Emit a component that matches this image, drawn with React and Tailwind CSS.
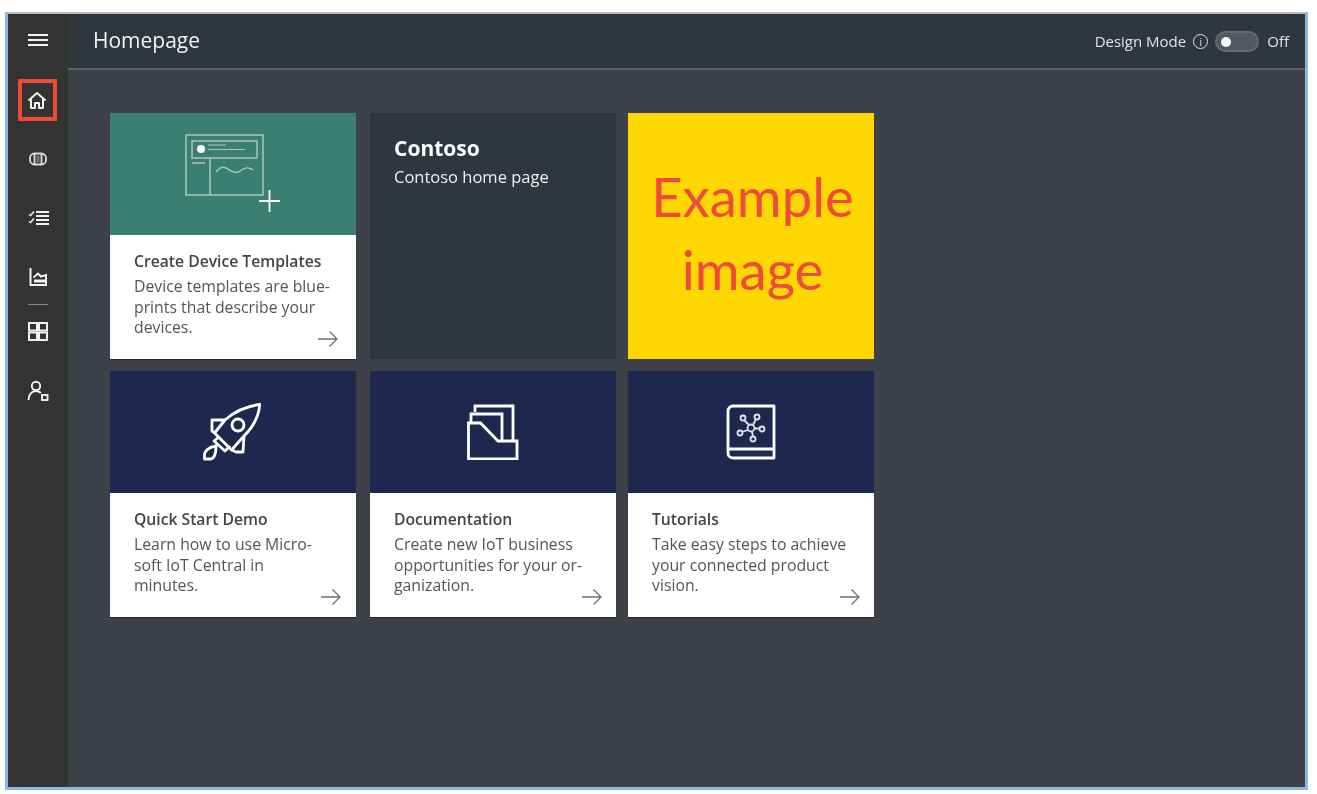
import React from 'react';

const MenuIcon = () => (
  <svg width="22" height="14" viewBox="0 0 22 14" fill="none" stroke="#f2f2f2" strokeWidth="1.800">
    <path d="M1 2h20M1 7h20M1 12h20" />
  </svg>
);

const HomeIcon = () => (
  <svg width="20" height="19" viewBox="0 0 20 19" fill="none" stroke="#f2f2f2" strokeWidth="2" strokeLinejoin="round">
    <path d="M1.500 9.500 10 2l8.500 7.500" />
    <path d="M4 7.500V17h4v-5h4v5h4V7.500" />
  </svg>
);

const DeviceIcon = () => (
  <svg width="18" height="14" viewBox="0 0 18 14" fill="none" stroke="#dcdcdc" strokeWidth="1.800">
    <rect x="1" y="1.500" width="16" height="11" rx="4.500" />
    <path d="M5.500 2v10M12.500 2v10" />
    <path d="M9 3.500v7" stroke="#777777" strokeWidth="3" />
  </svg>
);

const RulesIcon = () => (
  <svg width="21" height="16" viewBox="0 0 21 16" fill="none" stroke="#f2f2f2" strokeWidth="2">
    <path d="M8 2h13M8 6h13M8 10h13M8 14h13" />
    <path d="m1 4.500 1.500 1L6 1.500M1 11.500l1.500 1L6 8.500" strokeWidth="1.500" />
  </svg>
);

const AnalyticsIcon = () => (
  <svg width="18" height="18" viewBox="0 0 18 18" fill="none" stroke="#f2f2f2" strokeWidth="2">
    <path d="M1.500 0v17h15.500V7l-5 1.500-3-3-4.500 4" />
    <path d="M5 13h11" strokeWidth="3" />
  </svg>
);

const GridIcon = () => (
  <svg width="20" height="19" viewBox="0 0 20 19" fill="none" stroke="#f2f2f2" strokeWidth="2">
    <rect x="1" y="1" width="8" height="7.500" />
    <rect x="11" y="1" width="8" height="7.500" />
    <rect x="1" y="10.500" width="8" height="7.500" />
    <rect x="11" y="10.500" width="8" height="7.500" />
  </svg>
);

const AdminIcon = () => (
  <svg width="22" height="22" viewBox="0 0 22 22" fill="none" stroke="#f2f2f2" strokeWidth="1.900">
    <circle cx="9" cy="6" r="4.200" />
    <path d="M1.500 20c0-5 3-9 7.500-9 2 0 3.500.7 4.800 2" />
    <rect x="15" y="15" width="5.500" height="5" />
  </svg>
);

const ArrowIcon = () => (
  <svg width="22" height="18" viewBox="0 0 22 18" fill="none" stroke="#6e6e6e" strokeWidth="1.300">
    <path d="M1 9h19M12.500 1.500 20 9l-7.500 7.500" />
  </svg>
);

const TemplateArt = () => (
  <svg className="mt-[2px]" width="96" height="82" viewBox="0 0 96 82" fill="none" stroke="#a9c8bf" strokeWidth="1.500">
    <rect x="1" y="1" width="77" height="60" />
    <rect x="7" y="7" width="65" height="17" />
    <circle cx="16" cy="15" r="4" fill="#ffffff" stroke="none" />
    <path d="M23 11h18M23 15.500h37" strokeWidth="1.200" />
    <path d="M7 29h13M25 24v37" />
    <path d="M31 38c4-5 8-6 12-3s8 5 12 2 8-5 13-1" />
    <path d="M74 67h21M84.500 56v22" stroke="#ffffff" strokeWidth="1.800" />
  </svg>
);

const RocketArt = () => (
  <svg width="60" height="58" viewBox="0 0 60 58" fill="none" stroke="#ffffff" strokeWidth="2.800" strokeLinejoin="round">
    <path d="M56.700 1.500C45 3 32 8 22 17l-10.500 13 17 17L41 33C50 24 56 13 56.700 1.500Z" />
    <circle cx="35" cy="22" r="6" />
    <path d="M22 17H9v11l3 2" />
    <path d="m41 33-1 16h-7l-4-2" />
    <path d="m16 34-5 4 11 10 5-5" />
    <path d="M13 43C6 44 1.500 48 1.500 52v4H7c3 0 6-3 6-13Z" />
  </svg>
);

const DocsArt = () => (
  <svg width="52" height="56" viewBox="0 0 52 56" fill="none" stroke="#ffffff" strokeWidth="2.800">
    <path d="M8 8V2h38v34" />
    <path d="M4 18V10h31v26" />
    <path d="M1.500 19h12L31 37h19v18H1.500Z" />
  </svg>
);

const BookArt = () => (
  <svg width="52" height="56" viewBox="0 0 52 56" fill="none" stroke="#ffffff" strokeWidth="2.800" strokeLinejoin="round">
    <path d="M49 2H8a5 5 0 0 0-5 5v42c0 3 2 5 5 5h41Z" />
    <path d="M4 45h45" />
    <g strokeWidth="1.800" stroke="#dfe3ee">
      <circle cx="26" cy="24" r="3.500" />
      <circle cx="32" cy="13" r="2.500" />
      <circle cx="18" cy="14" r="2.500" />
      <circle cx="37" cy="25" r="2.500" />
      <circle cx="15" cy="29" r="2.500" />
      <circle cx="28" cy="35" r="2.500" />
      <path d="m28 21 3-6M24 21l-5-5M29.500 24.500h5M23 26l-6 2M27 27.500l1 5" />
    </g>
  </svg>
);

const LinkCard = ({ art, banner, title, lines, arrowClass }) => (
  <div className="flex h-[246px] w-[246px] flex-col bg-white shadow-[0_1px_1px_rgba(0,0,0,0.35)]">
    <div className={`flex h-[122px] shrink-0 items-center justify-center ${banner}`}>{art}</div>
    <div className="relative flex-1 pl-[24px] pt-[16px]">
      <h3 className="text-[15.700px] leading-[20px] font-semibold text-[#444444]">{title}</h3>
      <p className="mt-[5px] text-[15.800px] leading-[20.500px] text-[#555555]">
        {lines.map((line) => (
          <span key={line} className="block whitespace-nowrap">{line}</span>
        ))}
      </p>
      <div className={`absolute bottom-[11px] ${arrowClass}`}>
        <ArrowIcon />
      </div>
    </div>
  </div>
);

export default function App() {
  return (
    <div className="h-[794px] w-[1317px] overflow-hidden bg-white pt-[12px] pl-[5px] font-['Open_Sans','Liberation_Sans',sans-serif]">
      <div className="flex h-[778px] w-[1303px] border-x-[3px] border-b-[3px] border-t-2 border-x-[#8db6e0] border-b-[#8db6e0] border-t-[#b5bcc2] blur-[0.4px]">
        <aside className="flex w-[60px] shrink-0 flex-col items-center bg-[#333333] pt-[19px]">
          <MenuIcon />
          <div className="-ml-[2px] mt-[32px] flex h-[42px] w-[39px] items-center justify-center border-[4px] border-[#ef4a36]">
            <HomeIcon />
          </div>
          <div className="mt-[31px]"><DeviceIcon /></div>
          <div className="mt-[44px]"><RulesIcon /></div>
          <div className="mt-[42px]"><AnalyticsIcon /></div>
          <div className="mt-[18px] h-px w-[20px] bg-[#8a8a8a]" />
          <div className="mt-[17px]"><GridIcon /></div>
          <div className="mt-[39px]"><AdminIcon /></div>
        </aside>

        <div className="flex min-w-0 flex-1 flex-col bg-[#3e4149]">
          <header className="flex h-[56px] shrink-0 items-center justify-between border-b-2 border-[#5a5f63] bg-[#30363e] pr-[16px] pl-[25px]">
            <h1 className="-mt-[2px] text-[21px] leading-none text-[#f4f4f4]">Homepage</h1>
            <div className="mt-[1px] flex items-center text-[15px] text-[#e2e4e6]">
              <span>Design Mode</span>
              <span className="ml-[7px] flex h-[15px] w-[15px] items-center justify-center rounded-full border border-[#e2e4e6] text-[10px] leading-none">i</span>
              <span className="ml-[7px] flex h-[21px] w-[44px] items-center rounded-full border-2 border-[#666a6f] bg-[#55585e] pl-[4px]">
                <span className="h-[10px] w-[10px] rounded-full bg-white" />
              </span>
              <span className="ml-[8px]">Off</span>
            </div>
          </header>

          <main className="flex-1 pt-[43px] pl-[42px]">
            <div className="grid grid-cols-[260px_258px_246px] gap-y-[12px]">
              <LinkCard
                banner="bg-[#3b7f70]"
                art={<TemplateArt />}
                title="Create Device Templates"
                lines={['Device templates are blue-', 'prints that describe your', 'devices.']}
                arrowClass="right-[17px]"
              />
              <div className="h-[246px] w-[246px] bg-[#30363e] pt-[22px] pl-[24px] text-white">
                <h3 className="text-[21px] leading-[26px] font-bold">Contoso</h3>
                <p className="mt-[6px] text-[16.500px] leading-[20px] text-[#f0f0f0]">Contoso home page</p>
              </div>
              <div className="flex h-[246px] w-[246px] flex-col items-center justify-center bg-[#ffd700] pb-[6px] pl-[3px] text-[54.500px] leading-[73px] text-[#ef4b3c] font-['Lato',sans-serif]">
                <span>Example</span>
                <span>image</span>
              </div>
              <LinkCard
                banner="bg-[#1e284e]"
                art={<RocketArt />}
                title="Quick Start Demo"
                lines={['Learn how to use Micro-', 'soft IoT Central in', 'minutes.']}
                arrowClass="right-[14px]"
              />
              <LinkCard
                banner="bg-[#1e284e]"
                art={<DocsArt />}
                title="Documentation"
                lines={['Create new IoT business', 'opportunities for your or-', 'ganization.']}
                arrowClass="right-[13px]"
              />
              <LinkCard
                banner="bg-[#1e284e]"
                art={<BookArt />}
                title="Tutorials"
                lines={['Take easy steps to achieve', 'your connected product', 'vision.']}
                arrowClass="right-[13px]"
              />
            </div>
          </main>
        </div>
      </div>
    </div>
  );
}
